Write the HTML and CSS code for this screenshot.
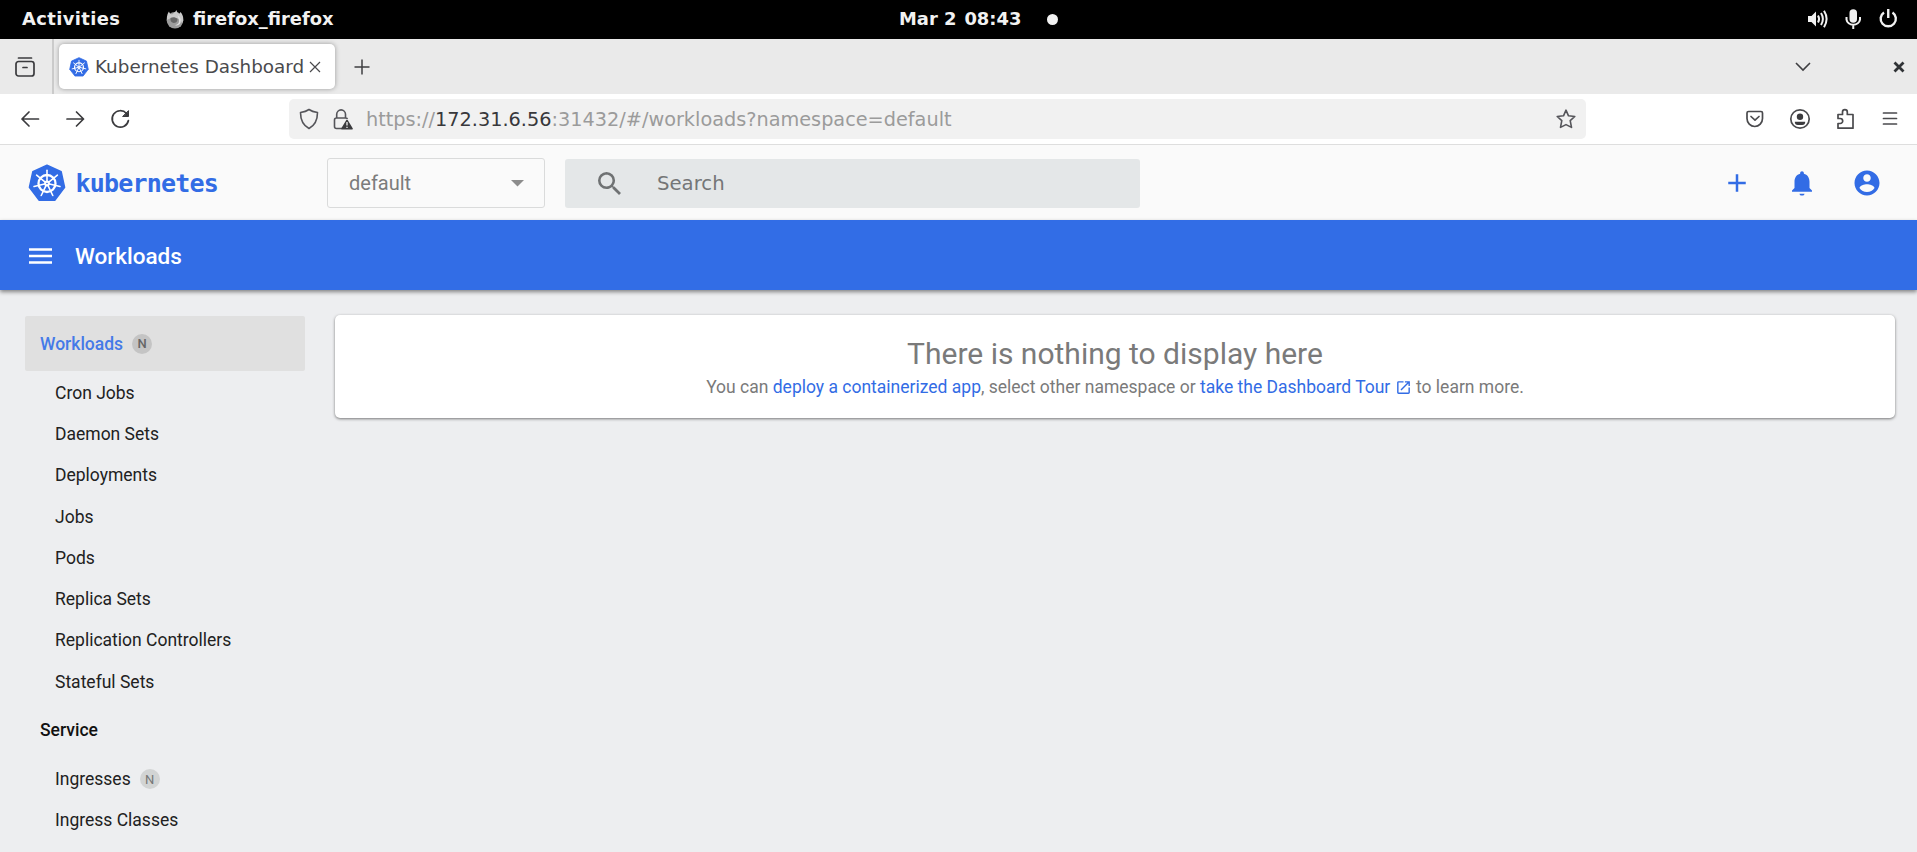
FILE: index.html
```html
<!DOCTYPE html>
<html lang="en">
<head>
<meta charset="utf-8">
<title>Kubernetes Dashboard</title>
<link rel="stylesheet" href="styles.css">
</head>
<body>
<svg class="defs" width="0" height="0">
  <symbol id="helm" viewBox="0 0 38 38">
    <path fill="#326ce5" stroke="#326ce5" stroke-width="1.5" stroke-linejoin="round" d="M19 1.200 33.200 7.800 36.600 23.400 26.800 36.200H11.200L1.400 23.400 4.800 7.800Z"/>
    <g stroke="#fff" fill="none">
      <circle cx="19" cy="19.500" r="8.500" stroke-width="2.300"/>
      <g stroke-width="1.600" stroke-linecap="round">
        <path id="spoke" d="M19 18V6.200"/>
        <use href="#spoke" transform="rotate(51.43 19 19.500)"/>
        <use href="#spoke" transform="rotate(102.86 19 19.500)"/>
        <use href="#spoke" transform="rotate(154.29 19 19.500)"/>
        <use href="#spoke" transform="rotate(205.71 19 19.500)"/>
        <use href="#spoke" transform="rotate(257.14 19 19.500)"/>
        <use href="#spoke" transform="rotate(308.57 19 19.500)"/>
      </g>
      <circle cx="19" cy="19.500" r="2" stroke-width="1.800"/>
    </g>
  </symbol>
</svg>

<div class="desktop-bar">
  <span class="activities">Activities</span>
  <svg class="app-icon" width="18" height="19" viewBox="0 0 18 19"><circle cx="9" cy="10.300" r="8.300" fill="#9c9c9c"/><path d="M.8 10C.6 6 1.800 3 3 1.500c.5 1.800 1.600 2.400 3 2.900C7.500 3 9.500 2.500 10.300 0c.6 2 1.500 3 3 4l1.200-2c2.800 3 3.800 8 1.500 11-1.500-3-3-4.500-6-5L5 8Z" fill="#c9c9c9"/><path d="M11.500 5c3 2 4 5 3 8-1.200 2.400-4 3-6 2 3 0 5-2 4.500-5Z" fill="#e0e0e0"/><path d="M4.500 8c2-1 5-1 7 1 0 3-2 4-4 4-2.500-.5-3.500-2.500-3-5Z" fill="#666"/></svg>
  <span class="app-name">firefox_firefox</span>
  <span class="clock"><span>Mar 2</span><span>08:43</span></span>
  <span class="dot"></span>
  <svg class="tray" width="92" height="22" viewBox="0 0 92 22">
    <path fill="#f2f2f2" d="M1 8h3.500L9 3.500v15L4.500 14H1Z"/>
    <g fill="none" stroke="#f2f2f2" stroke-width="2"><path d="M11 7.500q2.200 3.500 0 7"/><path d="M14 5q3.800 6 0 12"/><path d="M17 2.800q5.200 8.200 0 16.400"/></g>
    <rect x="42.500" y="1.200" width="7.500" height="13.500" rx="3.750" fill="#f2f2f2"/>
    <path d="M39.500 9v2.500a6.800 6 0 0 0 13.500 0V9M46.250 17.500V21" fill="none" stroke="#f2f2f2" stroke-width="2"/>
    <path d="M77 4.400a7.600 7.600 0 1 0 8.500 0M81.250 1v9" fill="none" stroke="#f2f2f2" stroke-width="2.400"/>
  </svg>
</div>

<div class="tab-strip">
  <div class="view-button"><svg width="20" height="20" viewBox="0 0 20 20" fill="none" stroke="#3b3b3e" stroke-width="1.700" stroke-linecap="round"><path d="M3.500 1h13"/><rect x="1" y="4.500" width="18" height="14.500" rx="2.500"/><path d="M8 10.500h4"/></svg></div>
  <div class="tab">
    <svg width="20" height="20"><use href="#helm"/></svg>
    <span class="tab-title">Kubernetes Dashboard</span>
    <svg class="tab-close" width="12" height="12" viewBox="0 0 12 12"><path d="M1 1l10 10M11 1 1 11" stroke="#4a4a4d" stroke-width="1.200"/></svg>
  </div>
  <svg class="new-tab" width="16" height="16" viewBox="0 0 16 16"><path d="M8 .5v15M.5 8h15" stroke="#3f3f42" stroke-width="1.500"/></svg>
  <svg class="list-tabs" width="16" height="10" viewBox="0 0 16 10"><path d="m1 1 7 7 7-7" fill="none" stroke="#3f3f42" stroke-width="1.600"/></svg>
  <svg class="close-window" width="12" height="12" viewBox="0 0 12 12"><path d="m1.500 1.500 9 9m0-9-9 9" stroke="#303336" stroke-width="2.800"/></svg>
</div>

<div class="nav-bar">
  <svg class="nav-icons" width="112" height="22" viewBox="0 0 112 22" fill="none" stroke="#3b3b3e" stroke-width="1.700" stroke-linecap="round" stroke-linejoin="round">
    <path d="M18.500 11H2M9 4l-7 7 7 7"/>
    <path d="M47 11h16.500M56.500 4l7 7-7 7"/>
    <path d="M106.500 5.500a8.200 8.200 0 1 0 1.900 7"/><path d="M108.500 3v5.500H103Z" fill="#3b3b3e" stroke-width="1"/>
  </svg>
  <div class="url-bar">
    <svg class="shield" width="54" height="22" viewBox="0 0 54 22" fill="none" stroke="#55555a" stroke-width="1.600" stroke-linejoin="round">
      <path d="M10 1.500c2.500 1.800 5 2.500 8.500 3 0 7-2 12.500-8.500 16C3.500 17 1.500 11.500 1.500 4.500c3.500-.5 6-1.200 8.500-3Z"/>
      <path d="M43 20.500h-5.500q-2 0-2-2v-6.500q0-2 2-2h9q1.500 0 2 1M37.700 10V6.300a4.400 4.400 0 0 1 8.800 0V10"/>
      <path d="M48 12.500 53 20.700H43Z" fill="#3b3b3e" stroke="#3b3b3e"/><path d="M48 14v3.500M48 18.800v1.200" stroke="#f0f0f0" stroke-width="1.300"/>
    </svg>
    <span class="url">https://<b>172.31.6.56</b>:31432/#/workloads?namespace=default</span>
    <svg class="star" width="20" height="20" viewBox="0 0 20 20"><path d="m10 1.200 2.500 5.600 6.300.7-4.600 4.200 1.300 6.700L10 15.600l-5.500 2.800 1.300-6.700L1.200 7.500l6.300-.7Z" fill="none" stroke="#55555a" stroke-width="1.600" stroke-linejoin="round"/></svg>
  </div>
  <svg class="tool-icons" width="154" height="22" viewBox="0 0 154 22" fill="none" stroke="#4a4a4d" stroke-width="1.700" stroke-linecap="round" stroke-linejoin="round">
    <path d="M3.500 3.500h12.500q1.500 0 1.500 1.500v5.500a7.750 8 0 0 1-15.500 0V5q0-1.500 1.500-1.500ZM6 8.500l4 3.700 4-3.700"/>
    <circle cx="55" cy="11" r="9.200"/><circle cx="55" cy="8.800" r="3.200" fill="#3b3b3e" stroke="none"/><path d="M49.800 13.800h10.400q0 3.200-3 3.200h-4.400q-3 0-3-3.200Z" fill="#3b3b3e" stroke="none"/>
    <path d="M93 20.200V15.500h2.200a2.500 2.500 0 0 0 0-5H93V6.500h4.500V4a2.400 2.400 0 0 1 4.800 0v2.500h5.700v13.700Z"/>
    <path d="M138.500 5h13M138.500 10.500h13M138.500 16h13"/>
  </svg>
</div>

<header class="header">
  <svg class="logo" width="38" height="38"><use href="#helm"/></svg>
  <span class="brand">kubernetes</span>
  <div class="namespace"><span>default</span><svg width="13" height="7" viewBox="0 0 13 7"><path d="M0 0h13L6.500 6.500Z" fill="#8c8c8c"/></svg></div>
  <div class="search"><svg width="23" height="23" viewBox="3 3 17.500 17.500"><path fill="#6f7273" d="M15.500 14h-.79l-.28-.27A6.471 6.471 0 0 0 16 9.500 6.500 6.500 0 1 0 9.500 16c1.610 0 3.090-.59 4.230-1.570l.27.28v.79l5 4.990L20.490 19l-4.990-5zm-6 0C7.010 14 5 11.990 5 9.500S7.010 5 9.500 5 14 7.010 14 9.500 11.990 14 9.500 14z"/></svg><span>Search</span></div>
  <div class="actions">
    <svg width="30" height="30" viewBox="0 0 24 24"><path d="M19 13h-6v6h-2v-6H5v-2h6V5h2v6h6v2z"/></svg>
    <svg width="30" height="30" viewBox="0 0 24 24"><path d="M12 22c1.100 0 2-.5 2-1.500h-4c0 1 .89 1.500 2 1.500zm6-6v-5c0-3.070-1.640-5.640-4.500-6.320V4c0-.83-.67-1.500-1.500-1.500s-1.500.67-1.500 1.500v.68C7.630 5.360 6 7.920 6 11v5l-2 2v1h16v-1l-2-2z"/></svg>
    <svg width="30" height="30" viewBox="0 0 24 24"><path d="M12 2C6.480 2 2 6.480 2 12s4.480 10 10 10 10-4.480 10-10S17.520 2 12 2zm0 3c1.660 0 3 1.340 3 3s-1.340 3-3 3-3-1.340-3-3 1.340-3 3-3zm0 14.200c-2.500 0-4.710-1.280-6-3.220.03-1.990 4-3.080 6-3.080 1.990 0 5.970 1.090 6 3.080-1.290 1.940-3.500 3.220-6 3.220z"/></svg>
  </div>
</header>

<div class="title-bar">
  <svg width="23" height="16" viewBox="0 0 23 16"><path d="M0 1.400h23M0 8h23M0 14.600h23" stroke="#fff" stroke-width="2.500"/></svg>
  <span>Workloads</span>
</div>

<main class="content">
  <nav class="sidebar">
    <div class="group active">Workloads<i class="badge">N</i></div>
    <div class="item">Cron Jobs</div>
    <div class="item">Daemon Sets</div>
    <div class="item">Deployments</div>
    <div class="item">Jobs</div>
    <div class="item">Pods</div>
    <div class="item">Replica Sets</div>
    <div class="item">Replication Controllers</div>
    <div class="item">Stateful Sets</div>
    <div class="group">Service</div>
    <div class="item">Ingresses<i class="badge">N</i></div>
    <div class="item">Ingress Classes</div>
    <div class="item clipped"><i class="badge"></i></div>
  </nav>
  <section class="card">
    <h1>There is nothing to display here</h1>
    <p>You can <a>deploy a containerized app</a>, select other namespace or <a>take the Dashboard Tour <svg width="17" height="17" viewBox="0 0 24 24"><path d="M19 19H5V5h7V3H5a2 2 0 0 0-2 2v14a2 2 0 0 0 2 2h14c1.100 0 2-.9 2-2v-7h-2v7zM14 3v2h3.590l-9.830 9.830 1.410 1.410L19 6.410V10h2V3h-7z"/></svg></a> to learn more.</p>
  </section>
</main>
</body>
</html>
```
FILE: styles.css
```css
* { box-sizing: border-box; }
body { margin: 0; width: 1917px; height: 852px; overflow: hidden; display: flex; flex-direction: column; background: #edeef0; font-family: Roboto, sans-serif; white-space: nowrap; }
svg { display: block; flex: none; }
.defs { position: absolute; }

.desktop-bar { flex: none; height: 39px; background: #000; color: #f2f2f2; display: flex; align-items: center; font: bold 17.900px/20px "DejaVu Sans", sans-serif; padding: 0 18px 1px 22px; }
.activities { width: 144px; letter-spacing: .4px; }
.app-name { margin-left: 9px; width: 706px; }
.clock { display: flex; gap: 8px; width: 148px; }
.dot { width: 11px; height: 11px; border-radius: 50%; background: #f2f2f2; }
.tray { margin-left: auto; }

.tab-strip { flex: none; height: 55px; background: #eaeaea; display: flex; align-items: center; padding-right: 12px; font-family: "DejaVu Sans", sans-serif; }
.view-button { width: 54px; height: 55px; border-right: 2px solid #cbcbcb; padding: 18px 0 0 15px; }
.tab { margin-left: 5px; width: 276px; height: 45px; border-radius: 5px; background: #fff; box-shadow: 0 0 5px rgba(0,0,0,.35); display: flex; align-items: center; padding-left: 10px; }
.tab-title { margin-left: 6px; width: 214px; font-size: 18.350px; color: #4a4a4d; }
.new-tab { margin-left: 19px; }
.list-tabs { margin-left: auto; }
.close-window { margin-left: 82px; }

.nav-bar { flex: none; height: 51px; background: #fff; border-bottom: 1px solid #dedede; display: flex; align-items: center; font-family: "DejaVu Sans", sans-serif; }
.nav-icons { margin-left: 20px; margin-right: 157px; }
.url-bar { width: 1297px; height: 40px; border-radius: 5px; background: #f1f1f1; display: flex; align-items: center; padding: 0 10px; }
.url { margin-left: 13px; font-size: 19.270px; color: #9b9b9b; }
.url b { font-weight: normal; color: #38383b; }
.star { margin-left: auto; }
.tool-icons { margin-left: 159px; }

.header { flex: none; height: 75px; background: #fafafa; display: flex; align-items: center; padding: 1px 35px 0 0; }
.logo { margin-left: 28px; }
.brand { width: 251px; margin-left: 9.500px; margin-right: .500px; font: bold 25px "DejaVu Sans Mono", monospace; letter-spacing: -.800px; color: #326ce5; }
.namespace { width: 218px; height: 50px; border: 1px solid #dadbdb; border-radius: 3px; display: flex; align-items: center; justify-content: space-between; padding: 0 20px 0 21px; font-size: 20px; color: #7c7c7c; }
.search { margin-left: 20px; width: 575px; height: 49px; border-radius: 3px; background: #e4e7e8; display: flex; align-items: center; padding-left: 33px; font: 19.700px "DejaVu Sans", sans-serif; color: #747677; }
.search span { margin-left: 36px; }
.actions { margin-left: auto; display: flex; gap: 35px; fill: #326ce5; }

.title-bar { position: relative; flex: none; height: 70px; background: #326de6; box-shadow: 0 2px 4px rgba(0,0,0,.45); display: flex; align-items: center; padding: 2px 0 0 28.500px; color: #fff; font-size: 22.500px; font-weight: 500; }
.title-bar span { margin-left: 23.500px; }

.content { flex: 1; min-height: 0; display: flex; padding: 25px 22px 0 25px; }
.sidebar { width: 280px; padding-top: 1.250px; color: #212121; font-size: 17.500px; }
.group, .item { display: flex; align-items: center; }
.group { height: 56.250px; padding-left: 15px; font-weight: 500; color: #111; }
.item { height: 41.250px; padding-left: 30px; }
.active { height: 55px; margin-bottom: .900px; background: #e0e0e0; border-radius: 2px; color: #457ae8; }
.clipped { padding-left: 96px; }
.badge { width: 20px; height: 20px; margin-left: 9px; border-radius: 50%; background: #d2d4d4; color: #777; display: grid; place-items: center; font-style: normal; font-size: 13px; }
.active .badge { background: #c4c4c4; color: #666; }
.card { flex: 1; margin-left: 30px; height: 103px; background: #fff; border-radius: 5px; box-shadow: 0 1px 3px rgba(0,0,0,.5); text-align: center; color: #7a7a7a; }
.card h1 { margin: 20px 0 0; font-size: 30px; line-height: 38px; font-weight: 400; }
.card p { margin: 2px 0 0; font-size: 17.500px; line-height: 25px; }
.card a { color: #326ce5; }
.card p svg { display: inline-block; fill: #326ce5; vertical-align: -3px; }
```
